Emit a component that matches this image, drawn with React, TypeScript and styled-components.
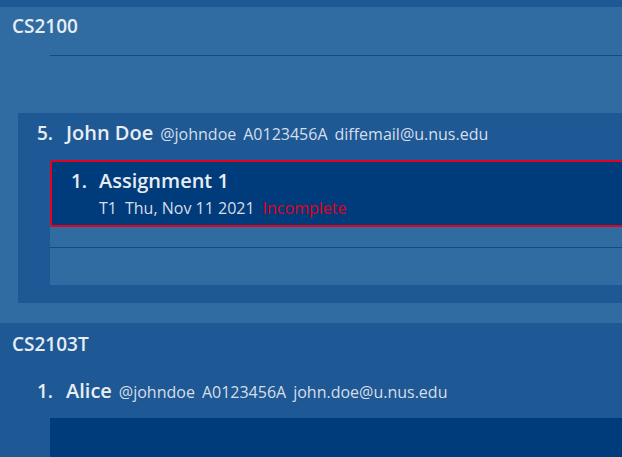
import React from "react";
import styled, { createGlobalStyle } from "styled-components";

const LIGHT = "#306ba2";
const DARK = "#1e5995";
const DEEP = "#003b7b";
const TEXT = "#e8edf3";
const SUB = "#d6dee9";

const Global = createGlobalStyle`
  html, body { margin: 0; padding: 0; background: ${DARK}; overflow: hidden; }
  body { font-family: "Open Sans", "Noto Sans", sans-serif; color: ${TEXT}; }
`;

const Page = styled.div`
  width: 622px;
  height: 457px;
  overflow: hidden;
  display: flex;
  flex-direction: column;
  padding-top: 7px;
  box-sizing: border-box;
`;

const ModuleCell = styled.section<{ $light?: boolean }>`
  background: ${(p) => (p.$light ? LIGHT : DARK)};
  display: flex;
  flex-direction: column;
  padding: 0 0 ${(p) => (p.$light ? "20px" : "0")} 0;
  flex-shrink: 0;
`;

const ModuleTitle = styled.div<{ $top: number }>`
  font-weight: 600;
  font-size: 19px;
  line-height: 22px;
  padding: ${(p) => p.$top}px 0 0 12px;
  height: 31px;
  box-sizing: border-box;
  white-space: nowrap;
`;

const EmptyRow = styled.div`
  margin-left: 50px;
  height: 17px;
  border-bottom: 1px solid #17497f;
`;

const Spacer = styled.div<{ $h: number }>`
  height: ${(p) => p.$h}px;
`;

const PersonPanel = styled.div`
  margin-left: 18px;
  background: ${DARK};
  display: flex;
  flex-direction: column;
  padding-bottom: 18px;
`;

const PersonRow = styled.div`
  display: flex;
  align-items: baseline;
  padding-left: 19px;
  height: 47px;
  box-sizing: border-box;
  padding-top: 8px;
  line-height: 24px;
  white-space: nowrap;
`;

const Index = styled.span`
  font-weight: 600;
  font-size: 19px;
  width: 29px;
`;

const Name = styled.span`
  font-weight: 600;
  font-size: 20px;
  margin-right: 7px;
`;

const Meta = styled.span`
  font-size: 16px;
  color: ${SUB};
  margin-right: 7px;
`;

const TaskCard = styled.div`
  margin-left: 32px;
  height: 67px;
  box-sizing: border-box;
  background: ${DEEP};
  border: 2px solid #e8001c;
  border-right: none;
  border-radius: 3px 0 0 3px;
  padding: 7px 0 0 19px;
  display: flex;
  flex-direction: column;
`;

const TaskTitleRow = styled.div`
  display: flex;
  align-items: baseline;
  line-height: 24px;
  white-space: nowrap;
`;

const TaskIndex = styled.span`
  font-weight: 600;
  font-size: 19px;
  width: 28px;
`;

const TaskTitle = styled.span`
  font-weight: 600;
  font-size: 20px;
`;

const TaskMeta = styled.div`
  padding-left: 28px;
  font-size: 16px;
  color: ${SUB};
  white-space: nowrap;
  line-height: 20px;
  margin-top: 5px;
  display: flex;
  gap: 8px;
`;

const Status = styled.span`
  color: #e0001b;
`;

const TaskListFiller = styled.div`
  margin-left: 32px;
  background: ${LIGHT};
  height: 58px;
  display: flex;
  flex-direction: column;
`;

const FillerRow = styled.div`
  height: 20px;
  border-bottom: 1px solid #17497f;
`;

const DeepBlock = styled.div`
  margin-left: 32px;
  background: ${DEEP};
  height: 60px;
`;

export default function App() {
  return (
    <Page>
      <Global />
      <ModuleCell $light>
        <ModuleTitle $top={8}>CS2100</ModuleTitle>
        <EmptyRow />
        <Spacer $h={57} />
        <PersonPanel>
          <PersonRow>
            <Index>5.</Index>
            <Name>John Doe</Name>
            <Meta>@johndoe</Meta>
            <Meta>A0123456A</Meta>
            <Meta>diffemail@u.nus.edu</Meta>
          </PersonRow>
          <TaskCard>
            <TaskTitleRow>
              <TaskIndex>1.</TaskIndex>
              <TaskTitle>Assignment 1</TaskTitle>
            </TaskTitleRow>
            <TaskMeta>
              <span>T1</span>
              <span>Thu, Nov 11 2021</span>
              <Status>Incomplete</Status>
            </TaskMeta>
          </TaskCard>
          <TaskListFiller>
            <FillerRow />
          </TaskListFiller>
        </PersonPanel>
      </ModuleCell>
      <ModuleCell>
        <ModuleTitle $top={10}>CS2103T</ModuleTitle>
        <Spacer $h={17} />
        <PersonPanel>
          <PersonRow>
            <Index>1.</Index>
            <Name>Alice</Name>
            <Meta>@johndoe</Meta>
            <Meta>A0123456A</Meta>
            <Meta>john.doe@u.nus.edu</Meta>
          </PersonRow>
          <DeepBlock />
        </PersonPanel>
      </ModuleCell>
    </Page>
  );
}
